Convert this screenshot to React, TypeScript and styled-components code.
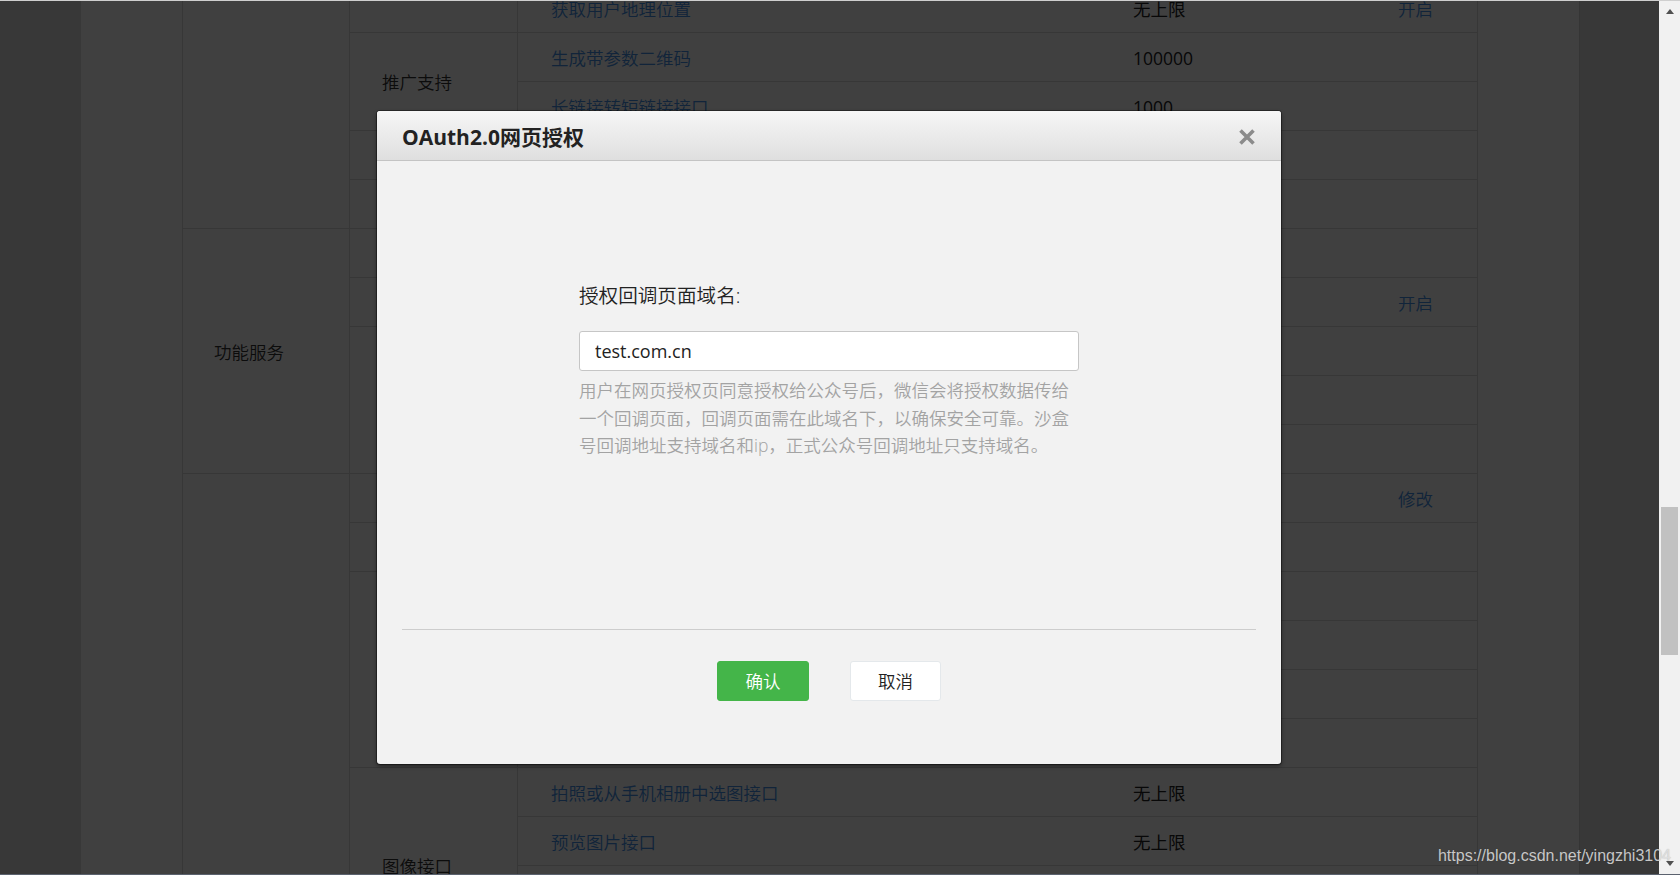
import React from "react";
import styled, { createGlobalStyle } from "styled-components";

const GlobalStyle = createGlobalStyle`
	html, body {
		margin: 0;
		padding: 0;
		overflow: hidden;
	}
	body {
		font-family: "Open Sans", "Noto Sans CJK SC", sans-serif;
		font-weight: 350;
	}
	* {
		box-sizing: border-box;
	}
`;

interface IApi {
	name: string;
	limit: string;
	action?: string;
}

interface IFeature {
	name: string;
	apis: IApi[];
}

interface ICategory {
	name: string;
	features: IFeature[];
}

const categories: ICategory[] = [
	{
		name: "对话服务",
		features: [
			{
				name: "发送消息",
				apis: [
					{ name: "客服接口", limit: "500000" },
					{ name: "群发接口", limit: "100" },
					{ name: "模板消息接口", limit: "100000" },
				],
			},
			{
				name: "用户管理",
				apis: [
					{ name: "用户分组管理", limit: "1000" },
					{ name: "获取用户基本信息", limit: "5000000" },
					{ name: "获取用户地理位置", limit: "无上限", action: "开启" },
				],
			},
			{
				name: "推广支持",
				apis: [
					{ name: "生成带参数二维码", limit: "100000" },
					{ name: "长链接转短链接接口", limit: "1000" },
				],
			},
			{ name: "界面丰富", apis: [{ name: "自定义菜单", limit: "1000" }] },
			{ name: "素材管理", apis: [{ name: "素材管理接口", limit: "5000" }] },
		],
	},
	{
		name: "功能服务",
		features: [
			{ name: "智能接口", apis: [{ name: "语义理解接口", limit: "1000" }] },
			{ name: "设备功能", apis: [{ name: "设备功能接口", limit: "无上限", action: "开启" }] },
			{
				name: "多客服",
				apis: [
					{ name: "获取客服聊天记录接口", limit: "5000" },
					{ name: "客服管理接口", limit: "无上限" },
					{ name: "会话控制接口", limit: "无上限" },
				],
			},
		],
	},
	{
		name: "网页服务",
		features: [
			{ name: "网页帐号", apis: [{ name: "网页授权获取用户基本信息", limit: "无上限", action: "修改" }] },
			{ name: "基础接口", apis: [{ name: "判断当前客户端版本是否支持指定JS接口", limit: "无上限" }] },
			{
				name: "分享接口",
				apis: [
					{ name: "获取“分享到朋友圈”按钮点击状态及自定义分享内容接口", limit: "无上限" },
					{ name: "获取“分享给朋友”按钮点击状态及自定义分享内容接口", limit: "无上限" },
					{ name: "获取“分享到QQ”按钮点击状态及自定义分享内容接口", limit: "无上限" },
					{ name: "获取“分享到腾讯微博”按钮点击状态及自定义分享内容接口", limit: "无上限" },
				],
			},
			{
				name: "图像接口",
				apis: [
					{ name: "拍照或从手机相册中选图接口", limit: "无上限" },
					{ name: "预览图片接口", limit: "无上限" },
					{ name: "上传图片接口", limit: "无上限" },
					{ name: "下载图片接口", limit: "无上限" },
				],
			},
			{
				name: "音频接口",
				apis: [
					{ name: "开始录音接口", limit: "无上限" },
					{ name: "停止录音接口", limit: "无上限" },
					{ name: "播放语音接口", limit: "无上限" },
				],
			},
			{ name: "智能接口", apis: [{ name: "识别音频并返回识别结果接口", limit: "无上限" }] },
			{ name: "设备信息", apis: [{ name: "获取网络状态接口", limit: "无上限" }] },
			{
				name: "地理位置",
				apis: [
					{ name: "使用微信内置地图查看位置接口", limit: "无上限" },
					{ name: "获取地理位置接口", limit: "无上限" },
				],
			},
			{
				name: "界面操作",
				apis: [
					{ name: "隐藏右上角菜单接口", limit: "无上限" },
					{ name: "显示右上角菜单接口", limit: "无上限" },
					{ name: "关闭当前网页窗口接口", limit: "无上限" },
				],
			},
		],
	},
];

// how far the page is scrolled down, in px
const SCROLL_TOP = 262;
const THUMB_TOP = 485;

const Screen = styled.div`
	width: 1680px;
	height: 875px;
	display: flex;
	flex-direction: column;
	position: relative;
	overflow: hidden;
`;

const TopEdge = styled.div`
	flex: none;
	height: 1px;
	background: #cfcfcf;
`;

const BottomEdge = styled.div`
	flex: none;
	height: 1px;
	background: #5b626e;
`;

const Window = styled.div`
	flex: 1;
	min-height: 0;
	display: flex;
`;

const Viewport = styled.div`
	flex: 1;
	position: relative;
	overflow: hidden;
	background: #e0e0e0;
`;

const Card = styled.div`
	width: 1499px;
	margin-left: 81px;
	background: #ffffff;
	border-right: 1px solid #d2d2d2;
	padding-left: 101px;
	padding-bottom: 200px;
`;

const Table = styled.table`
	width: 1296px;
	table-layout: fixed;
	border-collapse: separate;
	border-spacing: 0;
	font-size: 17.5px;
	line-height: 24px;
	color: #333333;
`;

const Cell = styled.td`
	height: 49px;
	vertical-align: middle;
	border-bottom: 1px solid #dadada;
	padding: 1px 0 0 33px;
	white-space: nowrap;
	overflow: hidden;
`;

const CategoryCell = styled(Cell)`
	border-left: 1px solid #dadada;
	padding-left: 31px;
`;

const FeatureCell = styled(Cell)`
	border-left: 1px solid #dadada;
	padding-left: 32px;
`;

const ApiCell = styled(Cell)`
	border-left: 1px solid #dadada;
	color: #4590e6;
`;

const LimitCell = styled(Cell)`
	font-weight: 400;
	color: #222222;
`;

const ActionCell = styled(Cell)`
	border-right: 1px solid #dadada;
	color: #4590e6;
`;

const Overlay = styled.div`
	position: absolute;
	inset: 0;
	background: rgba(0, 0, 0, 0.75);
`;

const Dialog = styled.div`
	position: absolute;
	left: 377px;
	top: 110px;
	width: 904px;
	height: 653px;
	display: flex;
	flex-direction: column;
	background: #f2f2f2;
	border-radius: 3px;
	overflow: hidden;
	box-shadow: 0 0 0 1px rgba(0, 0, 0, 0.35), 0 2px 4px rgba(0, 0, 0, 0.45);
`;

const DialogHead = styled.div`
	flex: none;
	height: 50px;
	display: flex;
	align-items: center;
	justify-content: space-between;
	padding: 2px 25px 0 25px;
	background: linear-gradient(to bottom, #f6f6f6, #dfdfdf);
	border-bottom: 1px solid #c4c4c4;
`;

const DialogTitle = styled.h3`
	margin: 0;
	font-size: 21px;
	font-weight: 700;
	line-height: 28px;
	color: #222222;
`;

const CloseButton = styled.button`
	width: 18px;
	height: 18px;
	padding: 0;
	border: 0;
	background: none;
	display: flex;

	& > svg {
		display: block;
	}
`;

const DialogBody = styled.div`
	flex: none;
	height: 468px;
	padding-top: 121px;
`;

const Form = styled.div`
	width: 500px;
	margin: 0 auto;
`;

const Label = styled.label`
	display: block;
	font-size: 19.6px;
	line-height: 28px;
	color: #222222;
`;

const Input = styled.input`
	display: block;
	width: 500px;
	height: 40px;
	margin-top: 21px;
	padding: 0 15px;
	border: 1px solid #c6c6c6;
	border-radius: 3px;
	background: #ffffff;
	font-family: "Open Sans", "Noto Sans CJK SC", sans-serif;
	font-weight: 400;
	font-size: 18px;
	color: #222222;
	outline: none;
`;

const Tips = styled.p`
	margin: 6px 0 0 0;
	font-size: 17.5px;
	line-height: 27.5px;
	color: #a3a3a3;
`;

const DialogFoot = styled.div`
	flex: 1;
	margin: 0 25px;
	border-top: 1px solid #cdcdcd;
	padding-top: 31px;
	display: flex;
	justify-content: center;
	align-items: flex-start;
	gap: 41px;
`;

const Button = styled.button<{ $primary?: boolean }>`
	width: ${(props) => (props.$primary ? "92px" : "91px")};
	height: 40px;
	padding: 0;
	border-radius: 3px;
	border: 1px solid ${(props) => (props.$primary ? "#44b549" : "#e4e8eb")};
	background: ${(props) => (props.$primary ? "#44b549" : "#ffffff")};
	color: ${(props) => (props.$primary ? "#ffffff" : "#222222")};
	font-family: "Open Sans", "Noto Sans CJK SC", sans-serif;
	font-weight: 350;
	font-size: 17.5px;
	line-height: 38px;
`;

const Scrollbar = styled.div`
	flex: none;
	width: 21px;
	display: flex;
	flex-direction: column;
	background: #f1f1f1;
`;

const ScrollArrow = styled.div<{ $down?: boolean }>`
	flex: none;
	height: 21px;
	display: flex;
	align-items: center;
	justify-content: center;

	&::before {
		content: "";
		width: 0;
		height: 0;
		border-left: 4px solid transparent;
		border-right: 4px solid transparent;
		${(props) => (props.$down ? "border-top: 5px solid #505050;" : "border-bottom: 5px solid #505050;")}
	}
`;

const ScrollTrack = styled.div`
	flex: 1;
	padding: 0 2px;
`;

const ScrollThumb = styled.div`
	height: 148px;
	background: #c1c1c1;
`;

const Watermark = styled.div`
	position: absolute;
	right: 9px;
	bottom: 10px;
	font-family: "Liberation Sans", Arial, sans-serif;
	font-weight: 400;
	font-size: 16px;
	line-height: 18px;
	color: rgba(228, 228, 228, 0.85);
	text-shadow: 0 0 1px rgba(0, 0, 0, 0.25);
	pointer-events: none;
`;

const PermissionTable = () => {
	const rows: React.ReactNode[] = [];

	categories.forEach((category) => {
		const categorySpan = category.features.reduce((sum, feature) => sum + feature.apis.length, 0);

		category.features.forEach((feature, featureIndex) => {
			feature.apis.forEach((api, apiIndex) => {
				rows.push(
					<tr key={`${category.name}-${feature.name}-${api.name}`}>
						{featureIndex === 0 && apiIndex === 0 && (
							<CategoryCell rowSpan={categorySpan}>{category.name}</CategoryCell>
						)}
						{apiIndex === 0 && <FeatureCell rowSpan={feature.apis.length}>{feature.name}</FeatureCell>}
						<ApiCell>{api.name}</ApiCell>
						<LimitCell>{api.limit}</LimitCell>
						<ActionCell>{api.action || ""}</ActionCell>
					</tr>
				);
			});
		});
	});

	return (
		<Table>
			<colgroup>
				<col style={{ width: 167 }} />
				<col style={{ width: 168 }} />
				<col style={{ width: 583 }} />
				<col style={{ width: 265 }} />
				<col style={{ width: 113 }} />
			</colgroup>
			<tbody>{rows}</tbody>
		</Table>
	);
};

const App = () => {
	return (
		<Screen>
			<GlobalStyle />
			<TopEdge />
			<Window>
				<Viewport>
					<Card style={{ marginTop: -SCROLL_TOP }}>
						<PermissionTable />
					</Card>
					<Overlay />
					<Dialog>
						<DialogHead>
							<DialogTitle>OAuth2.0网页授权</DialogTitle>
							<CloseButton aria-label="关闭">
								<svg width="18" height="18" viewBox="0 0 18 18">
									<path d="M2.5 2.5 L15.5 15.5 M15.5 2.5 L2.5 15.5" stroke="#8b8b8b" strokeWidth="3.6" />
								</svg>
							</CloseButton>
						</DialogHead>
						<DialogBody>
							<Form>
								<Label>授权回调页面域名:</Label>
								<Input defaultValue="test.com.cn" />
								<Tips>
									用户在网页授权页同意授权给公众号后，微信会将授权数据传给一个回调页面，回调页面需在此域名下，以确保安全可靠。沙盒号回调地址支持域名和ip，正式公众号回调地址只支持域名。
								</Tips>
							</Form>
						</DialogBody>
						<DialogFoot>
							<Button $primary>确认</Button>
							<Button>取消</Button>
						</DialogFoot>
					</Dialog>
				</Viewport>
				<Scrollbar>
					<ScrollArrow />
					<ScrollTrack>
						<ScrollThumb style={{ marginTop: THUMB_TOP }} />
					</ScrollTrack>
					<ScrollArrow $down />
				</Scrollbar>
			</Window>
			<BottomEdge />
			<Watermark>https://blog.csdn.net/yingzhi3104</Watermark>
		</Screen>
	);
};

export default App;
